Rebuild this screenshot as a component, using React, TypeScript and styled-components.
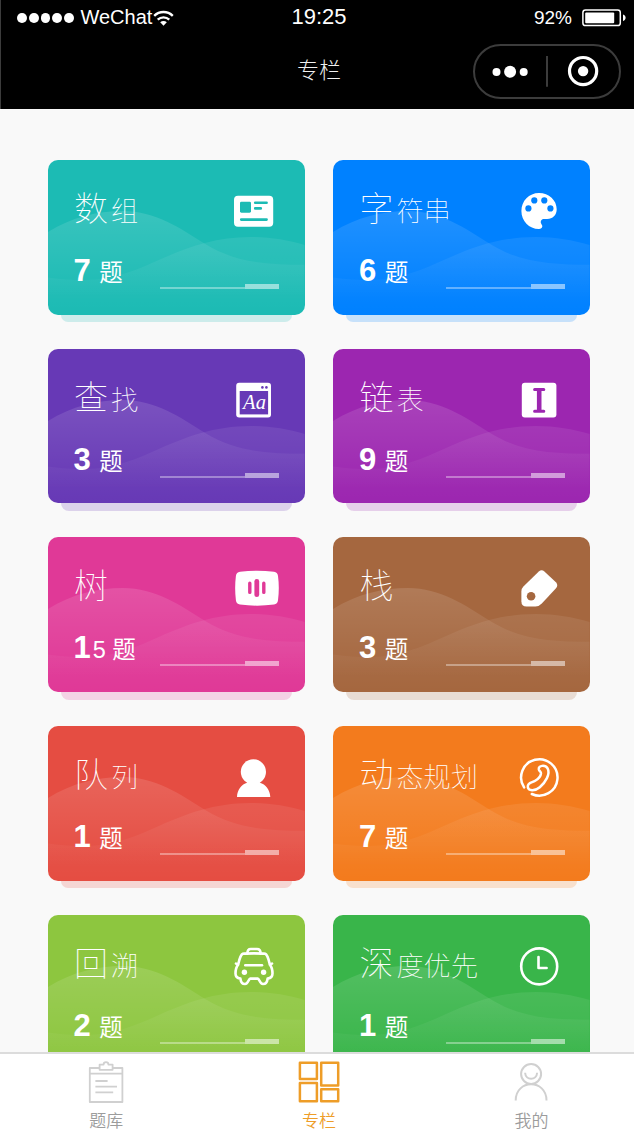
import React from "react";
import styled, { createGlobalStyle } from "styled-components";

const GlobalStyle = createGlobalStyle`
  * { box-sizing: border-box; }
  body {
    margin: 0;
    background: #f9f9f9;
    font-family: "Liberation Sans", "Noto Sans CJK SC", sans-serif;
  }
`;

const Screen = styled.div`
  display: flex;
  flex-direction: column;
  width: 634px;
  height: 1130px;
  overflow: hidden;
  background: #f9f9f9;
`;

const Header = styled.header`
  flex: none;
  height: 109px;
  background: #000;
  border-left: 1px solid #3c3c3c;
  color: #fff;
`;

const StatusBar = styled.div`
  display: grid;
  grid-template-columns: 1fr auto 1fr;
  align-items: center;
  height: 36px;
  padding: 0 7px 0 16px;
`;

const Carrier = styled.div`
  display: flex;
  align-items: center;
  font-size: 20px;
  line-height: 22px;
  height: 36px;
`;

const CarrierName = styled.span`
  padding: 0 1px 2px 0;
`;

const SignalDots = styled.div`
  display: flex;
  gap: 2px;
  margin-right: 6.5px;
`;

const SignalDot = styled.i`
  width: 9.8px;
  height: 9.8px;
  border-radius: 50%;
  background: #fff;
`;

const Clock = styled.div`
  font-size: 22px;
  line-height: 34px;
  height: 36px;
  padding-right: 6px;
`;

const Power = styled.div`
  display: flex;
  justify-content: flex-end;
  align-items: center;
  gap: 10px;
  font-size: 19px;
`;

const NavBar = styled.div`
  display: grid;
  grid-template-columns: 1fr auto 1fr;
  align-items: center;
  height: 71px;
  padding: 0 13px 0 3px;
`;

const NavTitle = styled.h1`
  grid-column: 2;
  margin: 0;
  padding: 0 0 7px 13px;
  font-family: "Noto Sans CJK SC", sans-serif;
  font-size: 22px;
  font-weight: 300;
  line-height: 30px;
  color: #f0f0f0;
`;

const Capsule = styled.div`
  justify-self: end;
  display: flex;
  align-items: center;
  width: 148px;
  height: 55px;
  border: 2px solid #3c3c3c;
  border-radius: 28px;
`;

const List = styled.main`
  flex: 1;
  min-height: 0;
  overflow: hidden;
  display: grid;
  grid-template-columns: 256.6px 256.6px;
  grid-auto-rows: 154.6px;
  gap: 34.07px 28.8px;
  padding: 51px 0 0 48px;
`;

const Card = styled.article<{ $color: string }>`
  position: relative;
  z-index: 0;
  display: flex;
  flex-direction: column;
  border-radius: 10px;
  background: ${(p) => p.$color};
  color: #fff;

  &::after {
    content: "";
    position: absolute;
    z-index: -1;
    left: 13px;
    right: 13px;
    top: 100%;
    height: 7.6px;
    border-radius: 0 0 9px 9px;
    background: ${(p) => p.$color};
    opacity: 0.2;
  }
`;

const Waves = styled.svg`
  position: absolute;
  inset: 0;
  z-index: -1;
  width: 100%;
  height: 100%;
  border-radius: 10px;
`;

const CardTop = styled.div`
  display: flex;
  justify-content: space-between;
  height: 80px;
  padding: 24px 18.4px 0 26px;
`;

const CardTitle = styled.h2`
  margin: -2px 0 0;
  font-family: "Noto Sans CJK SC", sans-serif;
  font-size: 27.2px;
  font-weight: 100;
  line-height: 50px;
  white-space: nowrap;

  &::first-letter {
    font-size: 34px;
    letter-spacing: 3px;
  }
`;

const IconBox = styled.svg`
  flex: none;
  width: 56px;
  height: 56px;
`;

const CardBottom = styled.div`
  display: flex;
  justify-content: space-between;
  padding: 6px 25.2px 0 25.5px;
`;

const Count = styled.p`
  margin: 1px 0 0;
  font-size: 23.5px;
  font-family: "Liberation Sans", "Noto Sans CJK SC", sans-serif;
  line-height: 48px;

  &::first-letter {
    font-size: 31px;
    font-weight: 700;
    letter-spacing: 2px;
  }
`;

const Progress = styled.div`
  display: flex;
  align-items: flex-end;
  width: 119px;
  height: 43px;
`;

const Track = styled.i`
  width: 85px;
  height: 2px;
  background: rgba(255, 255, 255, 0.36);
`;

const Thumb = styled.i`
  width: 34px;
  height: 5px;
  background: rgba(255, 255, 255, 0.52);
`;

const TabBar = styled.nav`
  flex: none;
  display: flex;
  height: 78px;
  border-top: 2px solid #dcdcdc;
  background: #fff;
`;

const Tab = styled.div<{ $active?: boolean }>`
  flex: none;
  display: flex;
  flex-direction: column;
  align-items: center;
  width: 212.6px;
  padding-top: 5px;
  color: ${(p) => (p.$active ? "#ee9d28" : "#9c9c9c")};
  font-family: "Liberation Sans", "Noto Sans CJK SC", sans-serif;
  font-size: 17px;
  font-weight: 350;
  line-height: 17px;

  svg {
    flex: none;
    color: ${(p) => (p.$active ? "#ee9d28" : "#d0d0d0")};
    margin-bottom: 6px;
  }
`;

type IconProps = { bg: string };

const NewsIcon = ({ bg }: IconProps) => (
  <>
    <rect x="186" y="35.8" width="39.2" height="31" rx="4" fill="#fff" />
    <rect x="192" y="41.7" width="11" height="11" rx="1.4" fill={bg} />
    <path d="M207.2 42.8H218.6M207.2 48.4H212.8M193.2 59.6H218.6" stroke={bg} strokeWidth="2.6" strokeLinecap="round" />
  </>
);

const PaletteIcon = ({ bg }: IconProps) => (
  <>
    <path
      d="M205 69C195 69 187.4 61 187.4 51C187.4 41 195 33.1 205 33.1C215 33.1 222.7 40.4 222.7 49.2C222.7 55 218.6 59 213.2 59H210.2C207.6 59 206.2 61.2 207 63.2C207.6 64.5 208.5 65.2 208.3 66.6C208.1 68.3 206.8 69 205 69Z"
      fill="#fff"
    />
    {[[194.4, 48.4], [200.3, 40.4], [210.3, 40.4], [216.4, 48.4]].map(([x, y]) => (
      <circle key={x} cx={x} cy={y} r="3.1" fill={bg} />
    ))}
  </>
);

const FontIcon = ({ bg }: IconProps) => (
  <>
    <rect x="188.2" y="33.8" width="34.8" height="34.8" rx="3" fill="#fff" />
    <rect x="191.7" y="42" width="28.4" height="23.4" fill={bg} />
    <circle cx="214.4" cy="38.4" r="1.3" fill={bg} />
    <circle cx="218.4" cy="38.4" r="1.3" fill={bg} />
    <text x="195" y="60.4" fontFamily="Liberation Serif, serif" fontStyle="italic" fontSize="20.5" textLength="23" fill="#fff">
      Aa
    </text>
  </>
);

const CursorIcon = ({ bg }: IconProps) => (
  <>
    <rect x="187.8" y="33.8" width="34.6" height="34.8" rx="3" fill="#fff" />
    <path d="M200.6 40.4H209.8M200.6 62.2H209.8" stroke={bg} strokeWidth="3" strokeLinecap="round" />
    <path d="M205.2 40V62.6" stroke={bg} strokeWidth="4.6" />
  </>
);

const VoiceIcon = ({ bg }: IconProps) => (
  <>
    <path
      d="M192 34.8Q209 32.8 226 34.8Q229.5 35.2 230 39Q231.6 51 230 63.2Q229.5 67 226 67.5Q209 69.8 192 67.5Q188.4 67 187.9 63.2Q186.4 51 187.9 39Q188.4 35.2 192 34.8Z"
      fill="#fff"
    />
    <g stroke={bg} strokeLinecap="round">
      <path d="M201.8 46.2V55.4M215.8 46.2V55.4" strokeWidth="3.4" />
      <path d="M208.8 44.5V57.7" strokeWidth="4.8" />
    </g>
  </>
);

const TagIcon = ({ bg }: IconProps) => (
  <>
    <path
      d="M204.8 34.4Q207.7 32 210.4 34.4L221.9 45.2Q224.6 48.2 222 51.3L207.8 66.6Q205 69.6 201.5 69.6H192.6Q187.4 69.4 187.4 64.4V54.4Q187.4 51.6 189.4 49.6Z"
      fill="#fff"
    />
    <circle cx="197.1" cy="59.2" r="4.3" fill={bg} />
  </>
);

const PersonIcon = () => (
  <>
    <circle cx="205.4" cy="45.8" r="12.6" fill="#fff" />
    <path d="M189 71.1C189.2 63.6 193.6 58.4 199.2 56.8L200 54H211L211.8 56.8C217.6 58.4 222 63.6 222.3 71.1Z" fill="#fff" />
  </>
);

const PhoneIcon = () => (
  <g fill="none" stroke="#fff" strokeLinecap="round" strokeLinejoin="round">
    <path d="M190.1 61.4A18.2 18.2 0 1 1 197.8 68" strokeWidth="2.5" />
    <path
      d="M204.8 43.2C204.2 39.4 211.2 38.4 213.6 42.4C216.6 48 211.4 56.4 205.8 61.2C200.8 65.4 194.2 65 193.8 61C193.3 56.4 198 56.8 201.2 54.8C204.2 53 206.8 49.8 207 47.4C207.1 45.6 205.2 45.4 204.8 43.2Z"
      strokeWidth="2.5"
    />
  </g>
);

const TaxiIcon = () => (
  <g fill="none" stroke="#fff" strokeWidth="2.6" strokeLinecap="round" strokeLinejoin="round">
    <path d="M199.4 38.6C199.4 35.4 200.4 34 202.8 34H209C211.6 34 212.6 35.4 212.6 38.6" />
    <path d="M188 48.6L190.2 49.6C191.2 45.6 192.1 40 194.8 38.8C197 38.2 215 38.2 217.2 38.8C219.9 40 220.8 45.6 221.8 49.6L224 48.6M190.2 49.6C187.8 52.4 187.5 54.5 187.5 58.6C187.5 61.4 188.6 63.2 192.4 63.6C192.8 67.4 194.6 69 197 69C200.4 69 200.6 63.6 202.2 63.6H209.8C211.4 63.6 211.6 69 215 69C217.4 69 219.2 67.4 219.6 63.6C223.4 63.2 224.5 61.4 224.5 58.6C224.5 54.5 224.2 52.4 221.8 49.6" />
    <path d="M197.3 50.2H214" />
    <circle cx="196.4" cy="57.2" r="2.7" fill="#fff" stroke="none" />
    <circle cx="215.6" cy="57.2" r="2.7" fill="#fff" stroke="none" />
  </g>
);

const TimeIcon = () => (
  <g fill="none" stroke="#fff" strokeWidth="2.6" strokeLinecap="round" strokeLinejoin="round">
    <circle cx="205.2" cy="51.4" r="18" />
    <path d="M204.5 42V53H212.6" />
  </g>
);

const columns: { title: string; count: number; color: string; Icon: React.FC<IconProps> }[] = [
  { title: "数组", count: 7, color: "#1cbbb4", Icon: NewsIcon },
  { title: "字符串", count: 6, color: "#0081ff", Icon: PaletteIcon },
  { title: "查找", count: 3, color: "#6739b6", Icon: FontIcon },
  { title: "链表", count: 9, color: "#9c26b0", Icon: CursorIcon },
  { title: "树", count: 15, color: "#e03997", Icon: VoiceIcon },
  { title: "栈", count: 3, color: "#a5673f", Icon: TagIcon },
  { title: "队列", count: 1, color: "#e54d42", Icon: PersonIcon },
  { title: "动态规划", count: 7, color: "#f37b1d", Icon: PhoneIcon },
  { title: "回溯", count: 2, color: "#8dc63f", Icon: TaxiIcon },
  { title: "深度优先", count: 1, color: "#39b54a", Icon: TimeIcon },
];

const CardWaves = () => (
  <Waves viewBox="0 0 256.6 154.6" preserveAspectRatio="none">
    <defs>
      <linearGradient id="waveA" gradientUnits="userSpaceOnUse" x1="0" y1="50" x2="0" y2="140">
        <stop offset="0" stopColor="#fff" stopOpacity="0.13" />
        <stop offset="1" stopColor="#fff" stopOpacity="0" />
      </linearGradient>
      <linearGradient id="waveB" gradientUnits="userSpaceOnUse" x1="0" y1="76" x2="0" y2="154">
        <stop offset="0" stopColor="#fff" stopOpacity="0.08" />
        <stop offset="1" stopColor="#fff" stopOpacity="0" />
      </linearGradient>
    </defs>
    <path d="M0 72C24 57 49 51 75 51C107 51 132 68 157.6 84.3C188 103 220 104.7 256.6 104.7V154.6H0Z" fill="url(#waveA)" />
    <path d="M0 117.5C13 119.5 25 120 37 120C66 120 91 109 112 99.5C138 88 166 77 203 77C222 77 240 80 256.6 85V154.6H0Z" fill="url(#waveB)" />
  </Waves>
);

export default function App() {
  return (
    <Screen>
      <GlobalStyle />
      <Header>
        <StatusBar>
          <Carrier>
            <SignalDots>
              {[0, 1, 2, 3, 4].map((i) => (
                <SignalDot key={i} />
              ))}
            </SignalDots>
            <CarrierName>WeChat</CarrierName>
            <svg width="21" height="17" viewBox="0 0 21 17" fill="none" stroke="#fff" strokeWidth="2.4">
              <path d="M1.2 5.8C6.5 0.7 14.5 0.7 19.8 5.8M4.7 9.6C8 6.6 13 6.6 16.3 9.6" />
              <path d="M7.2 12.2C9 10.7 12 10.7 13.8 12.2L10.5 15.8Z" fill="#fff" stroke="none" />
            </svg>
          </Carrier>
          <Clock>19:25</Clock>
          <Power>
            92%
            <svg width="45" height="18" viewBox="0 0 45 18">
              <rect x="0.9" y="1" width="37.4" height="15.6" rx="2.6" fill="none" stroke="#fff" strokeWidth="1.5" />
              <rect x="3.2" y="3.4" width="29" height="10.8" rx="1" fill="#fff" />
              <path d="M41 5.6C44.5 6.4 44.5 11.2 41 12Z" fill="#fff" />
            </svg>
          </Power>
        </StatusBar>
        <NavBar>
          <NavTitle>专栏</NavTitle>
          <Capsule>
            <svg width="144" height="51" viewBox="0.5 0.5 144 51">
              <g fill="#fff">
                <circle cx="22" cy="26.6" r="4" />
                <circle cx="35.6" cy="26.3" r="6" />
                <circle cx="49.2" cy="26.6" r="4" />
                <circle cx="108.6" cy="25.6" r="5.2" />
              </g>
              <path d="M72.5 10.4V41.2" stroke="#3c3c3c" strokeWidth="2" />
              <circle cx="108.6" cy="25.6" r="13.6" fill="none" stroke="#fff" strokeWidth="3.2" />
            </svg>
          </Capsule>
        </NavBar>
      </Header>

      <List>
        {columns.map(({ title, count, color, Icon }) => (
          <Card key={title} $color={color}>
            <CardWaves />
            <CardTop>
              <CardTitle>{title}</CardTitle>
              <IconBox viewBox="182 24 56 56">
                <Icon bg={color} />
              </IconBox>
            </CardTop>
            <CardBottom>
              <Count>{count} 题</Count>
              <Progress>
                <Track />
                <Thumb />
              </Progress>
            </CardBottom>
          </Card>
        ))}
      </List>

      <TabBar>
        <Tab>
          <svg width="44" height="48" viewBox="84 1059 44 48" fill="none" stroke="currentColor" strokeWidth="1.8" strokeLinejoin="round">
            <path d="M99.5 1068H89.8V1102H122.4V1068H112.6M89.8 1073.6H122.4" />
            <path d="M99.6 1064.6H103.6C103.6 1061.4 108.4 1061.4 108.4 1064.6H112.6V1069.8H99.6Z" />
            <path d="M95.4 1081H107.6M95.4 1086.7H117M95.4 1092.4H113.2" />
          </svg>
          题库
        </Tab>
        <Tab $active>
          <svg width="44" height="48" viewBox="297 1059 44 48" fill="none" stroke="currentColor" strokeWidth="2.5" strokeLinejoin="round">
            <rect x="299.9" y="1062.8" width="17" height="16.2" />
            <rect x="321.2" y="1062.8" width="17" height="22.6" />
            <rect x="299.9" y="1082.9" width="17" height="18.4" />
            <rect x="321.2" y="1089.2" width="17" height="12.1" />
          </svg>
          专栏
        </Tab>
        <Tab>
          <svg width="44" height="48" viewBox="509.5 1059 44 48" fill="none" stroke="currentColor" strokeWidth="2">
            <circle cx="531.6" cy="1074" r="10" />
            <path d="M525.6 1072.8C526 1080.8 537.2 1080.8 537.6 1072.8" />
            <path d="M516.2 1100.4C516.2 1079 547 1079 547 1100.4" />
          </svg>
          我的
        </Tab>
      </TabBar>
    </Screen>
  );
}
